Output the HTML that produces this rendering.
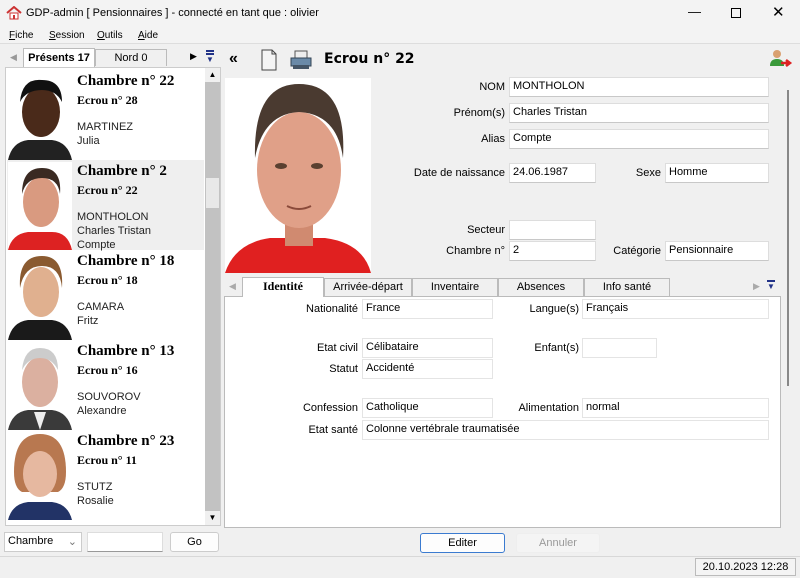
<!DOCTYPE html>
<html><head><meta charset="utf-8"><style>
*{box-sizing:border-box;margin:0;padding:0}
body{width:800px;height:578px;background:#f0f0f0;font-family:"Liberation Sans",sans-serif;font-size:11px;color:#000;position:relative;overflow:hidden}
.a{position:absolute}
.in{position:absolute;background:#fff;border:1px solid #ddd;border-bottom-color:#c8c8c8;height:20px;padding:2px 3px;font-size:11px;white-space:nowrap}
.lb{position:absolute;text-align:right;font-size:11px;height:20px;line-height:20px}
.card{position:absolute;left:8px;width:196px;height:88px}
.card .ph{position:absolute;left:0;top:0;width:64px;height:88px;background:#fff}
.card .t1{position:absolute;left:69px;top:1px;font:bold 15px "Liberation Serif",serif}
.card .t2{position:absolute;left:69px;top:21px;font:bold 12px "Liberation Serif",serif}
.card .t3{position:absolute;left:69px;top:48px;line-height:14px;font-size:11px;color:#222}
.tab{position:absolute;top:278px;height:18px;border:1px solid #bbb;border-bottom:none;background:#f0f0f0;text-align:center;line-height:17px;font-size:11px}
.btn{position:absolute;border:1px solid #ccc;background:#fdfdfd;border-radius:3px;text-align:center;font-size:11px;line-height:18px}
</style></head><body>
<div class="a" style="left:0;top:0;width:800px;height:28px;background:#f3f3f3"></div>
<svg class="a" style="left:6px;top:6px" width="16" height="14"><path d="M1 7 L8 1 L15 7" fill="none" stroke="#c33" stroke-width="2"/><rect x="4" y="7" width="8" height="6" fill="#fff" stroke="#c33"/><rect x="7" y="9" width="2" height="4" fill="#c33"/></svg>
<div class="a" style="left:26px;top:7px;font-size:11px">GDP-admin [ Pensionnaires ] - connecté en tant que : olivier</div>
<div class="a" style="left:688px;top:4px;font-size:13px">—</div>
<div class="a" style="left:731px;top:8px;width:10px;height:10px;border:1px solid #000"></div>
<div class="a" style="left:772px;top:3px;font-size:15px">✕</div>
<div class="a" style="left:0;top:28px;width:800px;height:16px;background:#f3f3f3;border-bottom:1px solid #ddd"></div>
<div class="a" style="left:9px;top:30px;font-size:10px"><u>F</u>iche</div>
<div class="a" style="left:49px;top:30px;font-size:10px"><u>S</u>ession</div>
<div class="a" style="left:97px;top:30px;font-size:10px"><u>O</u>utils</div>
<div class="a" style="left:138px;top:30px;font-size:10px"><u>A</u>ide</div>
<!-- left tabs -->
<div class="a" style="left:10px;top:52px;color:#999;font-size:9px">◀</div>
<div class="a" style="left:23px;top:48px;width:72px;height:20px;background:#fff;border:1px solid #bbb;border-bottom:none;font-weight:bold;font-size:11px;line-height:18px;text-align:center">Présents 17</div>
<div class="a" style="left:95px;top:49px;width:72px;height:17px;border:1px solid #bbb;border-bottom:none;text-align:center;line-height:16px">Nord 0</div>
<div class="a" style="left:190px;top:51px;font-size:9px">▶</div>
<div class="a" style="left:206px;top:50px;width:8px;height:2px;background:#238"></div>
<div class="a" style="left:206px;top:53px;width:8px;height:2px;background:#238"></div>
<div class="a" style="left:206px;top:56px;font-size:8px;color:#238;line-height:8px">▼</div>
<div class="a" style="left:5px;top:67px;width:216px;height:459px;background:#fff;border:1px solid #ccc"></div>
<div class="a" style="left:205px;top:68px;width:15px;height:457px;background:#c2c2c2"></div>
<div class="a" style="left:205px;top:68px;width:15px;height:14px;background:#f0f0f0;font-size:8px;text-align:center;line-height:14px">▲</div>
<div class="a" style="left:205px;top:511px;width:15px;height:14px;background:#f0f0f0;font-size:8px;text-align:center;line-height:14px">▼</div>
<div class="a" style="left:206px;top:178px;width:13px;height:30px;background:#e8e8e8"></div>
<div class="a" style="left:7px;top:160px;width:197px;height:90px;background:#efefef"></div>

<div class="card" style="top:72px"><svg class="ph" width="64" height="88"><rect width="64" height="88" fill="#fff"/><path d="M0 88 Q4 70 20 68 L44 68 Q60 70 64 88Z" fill="#222"/><ellipse cx="33" cy="40" rx="19" ry="25" fill="#4a2a1a"/><path d="M12 30 Q14 6 34 8 Q54 8 54 30 Q48 18 34 18 Q18 18 12 30Z" fill="#111"/></svg>
<div class="t1">Chambre n° 22</div><div class="t2">Ecrou n° 28</div><div class="t3">MARTINEZ<br>Julia</div></div>
<div class="card" style="top:162px"><svg class="ph" width="64" height="88"><rect width="64" height="88" fill="#fff"/><path d="M0 88 Q4 72 20 70 L44 70 Q60 70 64 88Z" fill="#d22"/><ellipse cx="33" cy="40" rx="18" ry="25" fill="#d99a80"/><path d="M14 32 Q14 6 34 6 Q54 6 52 32 Q50 16 34 16 Q18 16 14 32Z" fill="#3a2a22"/></svg>
<div class="t1">Chambre n° 2</div><div class="t2">Ecrou n° 22</div><div class="t3">MONTHOLON<br>Charles Tristan<br>Compte</div></div>
<div class="card" style="top:252px"><svg class="ph" width="64" height="88"><rect width="64" height="88" fill="#fff"/><path d="M0 88 Q4 70 20 68 L44 68 Q60 70 64 88Z" fill="#1a1a1a"/><ellipse cx="33" cy="40" rx="18" ry="25" fill="#e0b08f"/><path d="M12 36 Q10 4 34 4 Q56 4 54 36 Q52 14 34 14 Q16 14 12 36Z" fill="#8a5a30"/></svg>
<div class="t1">Chambre n° 18</div><div class="t2">Ecrou n° 18</div><div class="t3">CAMARA<br>Fritz</div></div>
<div class="card" style="top:342px"><svg class="ph" width="64" height="88"><rect width="64" height="88" fill="#fff"/><path d="M0 88 Q4 70 20 68 L44 68 Q60 70 64 88Z" fill="#3a3a3a"/><path d="M26 70 L38 70 L32 88Z" fill="#eee"/><ellipse cx="32" cy="40" rx="18" ry="25" fill="#dbb0a0"/><path d="M14 28 Q16 6 32 6 Q50 6 50 28 Q44 16 32 16 Q20 16 14 28Z" fill="#ccc"/></svg>
<div class="t1">Chambre n° 13</div><div class="t2">Ecrou n° 16</div><div class="t3">SOUVOROV<br>Alexandre</div></div>
<div class="card" style="top:432px;height:88px;overflow:hidden"><svg class="ph" width="64" height="88"><rect width="64" height="88" fill="#fff"/><path d="M0 88 Q4 72 20 70 L44 70 Q60 72 64 88Z" fill="#223366"/><path d="M6 40 Q6 2 32 2 Q58 2 58 40 Q58 56 50 60 L14 60 Q6 56 6 40Z" fill="#b87850"/><ellipse cx="32" cy="42" rx="17" ry="23" fill="#e6b8a0"/></svg>
<div class="t1">Chambre n° 23</div><div class="t2">Ecrou n° 11</div><div class="t3">STUTZ<br>Rosalie</div></div>

<!-- bottom left -->
<div class="in" style="left:4px;top:532px;width:78px;height:20px;border-color:#ccc">Chambre<span style="position:absolute;right:4px;top:2px;color:#777">⌄</span></div>
<div class="in" style="left:87px;top:532px;width:76px;height:20px;border-color:#ddd;border-bottom:1px solid #999"></div>
<div class="btn" style="left:170px;top:532px;width:49px;height:20px">Go</div>

<!-- right toolbar -->
<div class="a" style="left:229px;top:50px;font-size:16px;font-weight:bold">«</div>
<svg class="a" style="left:260px;top:49px" width="18" height="22"><path d="M2 1 H12 L16 5 V21 H2Z" fill="#f4f4f4" stroke="#444"/><path d="M12 1 V5 H16" fill="none" stroke="#444"/></svg>
<svg class="a" style="left:290px;top:50px" width="22" height="20"><rect x="5" y="1" width="12" height="8" fill="#eee" stroke="#555"/><rect x="1" y="8" width="20" height="8" fill="#6a8aa8" stroke="#345"/><rect x="3" y="15" width="16" height="4" fill="#456"/></svg>
<div class="a" style="left:324px;top:51px;font:bold 14px 'DejaVu Sans','Liberation Sans',sans-serif">Ecrou n° 22</div>
<svg class="a" style="left:769px;top:48px" width="24" height="22"><circle cx="8" cy="6" r="4" fill="#d9a070"/><path d="M1 18 Q1 11 8 11 Q15 11 15 18Z" fill="#3a9a3a"/><path d="M12 15 H20 M17 12 L21 15 L17 18" stroke="#d22" stroke-width="2.5" fill="none"/></svg>

<!-- main photo -->
<svg class="a" style="left:225px;top:78px" width="146" height="195"><rect width="146" height="195" fill="#fff"/><path d="M0 195 Q10 165 45 160 L100 160 Q138 165 146 195Z" fill="#e02020"/><rect x="60" y="140" width="28" height="28" fill="#d08a70"/><ellipse cx="74" cy="92" rx="42" ry="58" fill="#e0a088"/><path d="M30 80 Q28 6 74 6 Q122 6 118 80 Q112 36 74 34 Q38 36 30 80Z" fill="#4a3a30"/><ellipse cx="56" cy="88" rx="6" ry="3" fill="#5a4030"/><ellipse cx="92" cy="88" rx="6" ry="3" fill="#5a4030"/><path d="M62 128 Q74 134 86 128" stroke="#8a4a3a" stroke-width="2" fill="none"/></svg>

<div class="a" style="left:787px;top:90px;width:2px;height:296px;background:#888"></div>

<div class="lb" style="left:380px;width:125px;top:77px">NOM</div><div class="in" style="left:509px;top:77px;width:260px">MONTHOLON</div>
<div class="lb" style="left:380px;width:125px;top:103px">Prénom(s)</div><div class="in" style="left:509px;top:103px;width:260px">Charles Tristan</div>
<div class="lb" style="left:380px;width:125px;top:129px">Alias</div><div class="in" style="left:509px;top:129px;width:260px">Compte</div>
<div class="lb" style="left:380px;width:125px;top:163px">Date de naissance</div><div class="in" style="left:509px;top:163px;width:87px">24.06.1987</div>
<div class="lb" style="left:600px;width:61px;top:163px">Sexe</div><div class="in" style="left:665px;top:163px;width:104px">Homme</div>
<div class="lb" style="left:380px;width:125px;top:220px">Secteur</div><div class="in" style="left:509px;top:220px;width:87px"></div>
<div class="lb" style="left:380px;width:125px;top:241px">Chambre n°</div><div class="in" style="left:509px;top:241px;width:87px">2</div>
<div class="lb" style="left:600px;width:61px;top:241px">Catégorie</div><div class="in" style="left:665px;top:241px;width:104px">Pensionnaire</div>

<!-- tabs -->
<div class="a" style="left:229px;top:281px;color:#aaa;font-size:9px">◀</div>
<div class="tab" style="left:242px;width:82px;top:277px;height:20px;background:#fff;font-weight:bold;font-family:'Liberation Serif',serif;font-size:12px;z-index:2">Identité</div>
<div class="tab" style="left:324px;width:88px">Arrivée-départ</div>
<div class="tab" style="left:412px;width:86px">Inventaire</div>
<div class="tab" style="left:498px;width:86px">Absences</div>
<div class="tab" style="left:584px;width:86px">Info santé</div>
<div class="a" style="left:753px;top:281px;color:#aaa;font-size:9px">▶</div>
<div class="a" style="left:767px;top:280px;width:8px;height:2px;background:#238"></div>
<div class="a" style="left:767px;top:283px;font-size:8px;color:#238;line-height:8px">▼</div>
<div class="a" style="left:224px;top:296px;width:557px;height:232px;background:#fff;border:1px solid #bbb"></div>

<div class="lb" style="left:260px;width:98px;top:299px">Nationalité</div><div class="in" style="left:362px;top:299px;width:131px;border-color:#e4e4e4">France</div>
<div class="lb" style="left:480px;width:99px;top:299px">Langue(s)</div><div class="in" style="left:582px;top:299px;width:187px;border-color:#e4e4e4">Français</div>
<div class="lb" style="left:260px;width:98px;top:338px">Etat civil</div><div class="in" style="left:362px;top:338px;width:131px;border-color:#e4e4e4">Célibataire</div>
<div class="lb" style="left:480px;width:99px;top:338px">Enfant(s)</div><div class="in" style="left:582px;top:338px;width:75px;border-color:#e4e4e4"></div>
<div class="lb" style="left:260px;width:98px;top:359px">Statut</div><div class="in" style="left:362px;top:359px;width:131px;border-color:#e4e4e4">Accidenté</div>
<div class="lb" style="left:260px;width:98px;top:398px">Confession</div><div class="in" style="left:362px;top:398px;width:131px;border-color:#e4e4e4">Catholique</div>
<div class="lb" style="left:480px;width:99px;top:398px">Alimentation</div><div class="in" style="left:582px;top:398px;width:187px;border-color:#e4e4e4">normal</div>
<div class="lb" style="left:260px;width:98px;top:420px">Etat santé</div><div class="in" style="left:362px;top:420px;width:407px;border-color:#e4e4e4">Colonne vertébrale traumatisée</div>

<div class="btn" style="left:420px;top:533px;width:85px;height:20px;border:1px solid #3b7bd0">Editer</div>
<div class="btn" style="left:516px;top:533px;width:84px;height:20px;border-color:#eee;background:#f4f4f4;color:#999">Annuler</div>

<div class="a" style="left:0;top:556px;width:800px;height:1px;background:#d8d8d8"></div>
<div class="a" style="left:695px;top:558px;width:101px;height:18px;border:1px solid #bbb;background:#f4f4f4;text-align:center;line-height:16px;font-size:11px">20.10.2023 12:28</div>
</body></html>
